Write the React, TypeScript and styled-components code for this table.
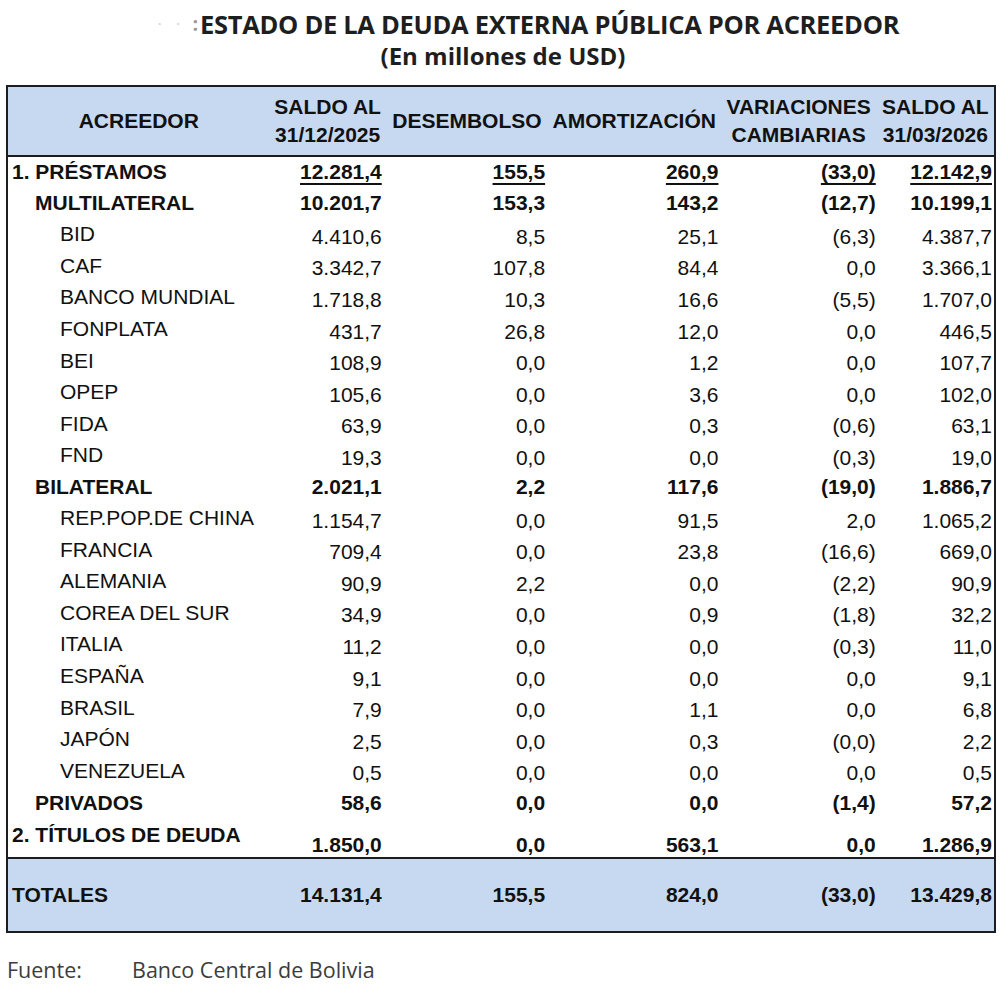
import React from "react"
import styled, { createGlobalStyle } from "styled-components"

type Level = 0 | 1 | 2

type Row = {
  label: string
  level: Level
  values: string[]
  bold?: boolean
  underline?: boolean
}

const rows: Row[] = [
  { label: "1. PRÉSTAMOS", level: 0, bold: true, underline: true, values: ["12.281,4", "155,5", "260,9", "(33,0)", "12.142,9"] },
  { label: "MULTILATERAL", level: 1, bold: true, values: ["10.201,7", "153,3", "143,2", "(12,7)", "10.199,1"] },
  { label: "BID", level: 2, values: ["4.410,6", "8,5", "25,1", "(6,3)", "4.387,7"] },
  { label: "CAF", level: 2, values: ["3.342,7", "107,8", "84,4", "0,0", "3.366,1"] },
  { label: "BANCO MUNDIAL", level: 2, values: ["1.718,8", "10,3", "16,6", "(5,5)", "1.707,0"] },
  { label: "FONPLATA", level: 2, values: ["431,7", "26,8", "12,0", "0,0", "446,5"] },
  { label: "BEI", level: 2, values: ["108,9", "0,0", "1,2", "0,0", "107,7"] },
  { label: "OPEP", level: 2, values: ["105,6", "0,0", "3,6", "0,0", "102,0"] },
  { label: "FIDA", level: 2, values: ["63,9", "0,0", "0,3", "(0,6)", "63,1"] },
  { label: "FND", level: 2, values: ["19,3", "0,0", "0,0", "(0,3)", "19,0"] },
  { label: "BILATERAL", level: 1, bold: true, values: ["2.021,1", "2,2", "117,6", "(19,0)", "1.886,7"] },
  { label: "REP.POP.DE CHINA", level: 2, values: ["1.154,7", "0,0", "91,5", "2,0", "1.065,2"] },
  { label: "FRANCIA", level: 2, values: ["709,4", "0,0", "23,8", "(16,6)", "669,0"] },
  { label: "ALEMANIA", level: 2, values: ["90,9", "2,2", "0,0", "(2,2)", "90,9"] },
  { label: "COREA DEL SUR", level: 2, values: ["34,9", "0,0", "0,9", "(1,8)", "32,2"] },
  { label: "ITALIA", level: 2, values: ["11,2", "0,0", "0,0", "(0,3)", "11,0"] },
  { label: "ESPAÑA", level: 2, values: ["9,1", "0,0", "0,0", "0,0", "9,1"] },
  { label: "BRASIL", level: 2, values: ["7,9", "0,0", "1,1", "0,0", "6,8"] },
  { label: "JAPÓN", level: 2, values: ["2,5", "0,0", "0,3", "(0,0)", "2,2"] },
  { label: "VENEZUELA", level: 2, values: ["0,5", "0,0", "0,0", "0,0", "0,5"] },
  { label: "PRIVADOS", level: 1, bold: true, values: ["58,6", "0,0", "0,0", "(1,4)", "57,2"] },
]

const titulos = { label: "2. TÍTULOS DE DEUDA", values: ["1.850,0", "0,0", "563,1", "0,0", "1.286,9"] }
const totales = { label: "TOTALES", values: ["14.131,4", "155,5", "824,0", "(33,0)", "13.429,8"] }

const colWidths = [262, 116, 162, 172, 156, 118]
const padRight = [0, 4, 3, 2, 1, 2]

const App = () => {
  return (
    <Page>
      <GlobalStyle />
      <Heading>
        <Title>
          <Prefix>
            <Faint>· ·</Faint>
            <Colon>:</Colon>
          </Prefix>
          ESTADO DE LA DEUDA EXTERNA PÚBLICA POR ACREEDOR
        </Title>
        <Subtitle>(En millones de USD)</Subtitle>
      </Heading>

      <Table>
        <colgroup>
          {colWidths.map((w, i) => (
            <col key={i} style={{ width: w }} />
          ))}
        </colgroup>
        <thead>
          <HeadRow>
            <HeadCell>ACREEDOR</HeadCell>
            <HeadCell>
              SALDO AL
              <br />
              31/12/2025
            </HeadCell>
            <HeadCell>DESEMBOLSO</HeadCell>
            <HeadCell>AMORTIZACIÓN</HeadCell>
            <HeadCell>
              VARIACIONES
              <br />
              CAMBIARIAS
            </HeadCell>
            <HeadCell>
              SALDO AL
              <br />
              31/03/2026
            </HeadCell>
          </HeadRow>
        </thead>
        <tbody>
          {rows.map((r) => (
            <DataRow key={r.label}>
              <Label $level={r.level} $bold={r.bold}>
                {r.label}
              </Label>
              {r.values.map((v, i) => (
                <Num key={i} $bold={r.bold} $pad={padRight[i + 1]}>
                  {r.underline ? <Under>{v}</Under> : v}
                </Num>
              ))}
            </DataRow>
          ))}
          <TitulosRow>
            <TitulosLabel>{titulos.label}</TitulosLabel>
            {titulos.values.map((v, i) => (
              <TitulosNum key={i} $pad={padRight[i + 1]}>
                {v}
              </TitulosNum>
            ))}
          </TitulosRow>
        </tbody>
        <tfoot>
          <TotalRow>
            <TotalLabel>{totales.label}</TotalLabel>
            {totales.values.map((v, i) => (
              <TotalNum key={i} $pad={padRight[i + 1]}>
                {v}
              </TotalNum>
            ))}
          </TotalRow>
        </tfoot>
      </Table>

      <Source>
        <SourceKey>Fuente:</SourceKey>
        <span>Banco Central de Bolivia</span>
      </Source>
    </Page>
  )
}

export default App

const GlobalStyle = createGlobalStyle`
  html, body {
    margin: 0;
    padding: 0;
    background: #ffffff;
  }
`

const Page = styled.div`
  width: 1000px;
  height: 992px;
  overflow: hidden;
  background: #ffffff;
`

const Heading = styled.div`
  display: grid;
  gap: 2px;
  padding-top: 9px;
  font-family: "Open Sans", "Liberation Sans", sans-serif;
  font-weight: 700;
  color: #1e1e1e;
`

const Title = styled.div`
  display: flex;
  align-items: center;
  height: 30px;
  padding-left: 158px;
  font-size: 25.5px;
  line-height: 30px;
  white-space: nowrap;
  letter-spacing: -0.3px;
`

const Prefix = styled.span`
  display: inline-flex;
  align-items: center;
  justify-content: space-between;
  width: 40px;
  height: 30px;
  margin-right: 2px;
  line-height: 30px;
`

const Faint = styled.span`
  color: #d8d8d8;
  font-size: 12px;
  letter-spacing: 6px;
`

const Colon = styled.span`
  color: #9a9a9a;
  font-size: 20px;
`

const Subtitle = styled.div`
  height: 30px;
  padding-left: 6px;
  text-align: center;
  font-size: 24px;
  line-height: 30px;
`

const Table = styled.table`
  margin: 14px 0 0 6px;
  width: 990px;
  table-layout: fixed;
  border-collapse: collapse;
  border: 2px solid #1d1d1d;
  font-family: "Liberation Sans", Arial, sans-serif;
  font-size: 21px;
  color: #111111;
`

const HeadRow = styled.tr`
  height: 70px;
  background: #c6d9f0;
  border-bottom: 2px solid #1d1d1d;
`

const HeadCell = styled.th`
  padding: 0;
  font-weight: 700;
  line-height: 28px;
  text-align: center;
  vertical-align: middle;
  white-space: nowrap;
`

const DataRow = styled.tr`
  height: 31.55px;
`

const Label = styled.td<{ $level: Level; $bold?: boolean }>`
  padding: ${(p) => (p.$bold ? "0" : "1px")} 0 ${(p) => (p.$bold ? "0" : "2px")}
    ${(p) => (p.$level === 0 ? "4px" : p.$level === 1 ? "27px" : "52px")};
  font-weight: ${(p) => (p.$bold ? 700 : 400)};
  white-space: nowrap;
  line-height: 24px;
`

const Num = styled.td<{ $bold?: boolean; $pad: number }>`
  padding: ${(p) => (p.$bold ? "0" : "4px")} ${(p) => p.$pad}px 0 0;
  text-align: right;
  font-weight: ${(p) => (p.$bold ? 700 : 400)};
  white-space: nowrap;
  line-height: 24px;
`

const Under = styled.span`
  text-decoration: underline;
  text-decoration-thickness: 2px;
  text-underline-offset: 4px;
`

const TitulosRow = styled.tr`
  height: 40px;
`

const TitulosLabel = styled.td`
  padding: 0 0 6px 4px;
  font-weight: 700;
  white-space: nowrap;
  line-height: 24px;
  vertical-align: middle;
`

const TitulosNum = styled.td<{ $pad: number }>`
  padding: 0 ${(p) => p.$pad}px 0 0;
  text-align: right;
  font-weight: 700;
  line-height: 24px;
  vertical-align: bottom;
`

const TotalRow = styled.tr`
  height: 74px;
  background: #c6d9f0;
  border-top: 2px solid #1d1d1d;
`

const TotalLabel = styled.td`
  padding: 0 0 0 4px;
  font-weight: 700;
  white-space: nowrap;
`

const TotalNum = styled.td<{ $pad: number }>`
  padding: 0 ${(p) => p.$pad}px 0 0;
  text-align: right;
  font-weight: 700;
`

const Source = styled.div`
  display: flex;
  margin-top: 24px;
  padding-left: 7px;
  font-family: "Open Sans", "Noto Sans", sans-serif;
  font-size: 21.5px;
  line-height: 26px;
  color: #3c3c3c;
`

const SourceKey = styled.span`
  width: 125px;
`
